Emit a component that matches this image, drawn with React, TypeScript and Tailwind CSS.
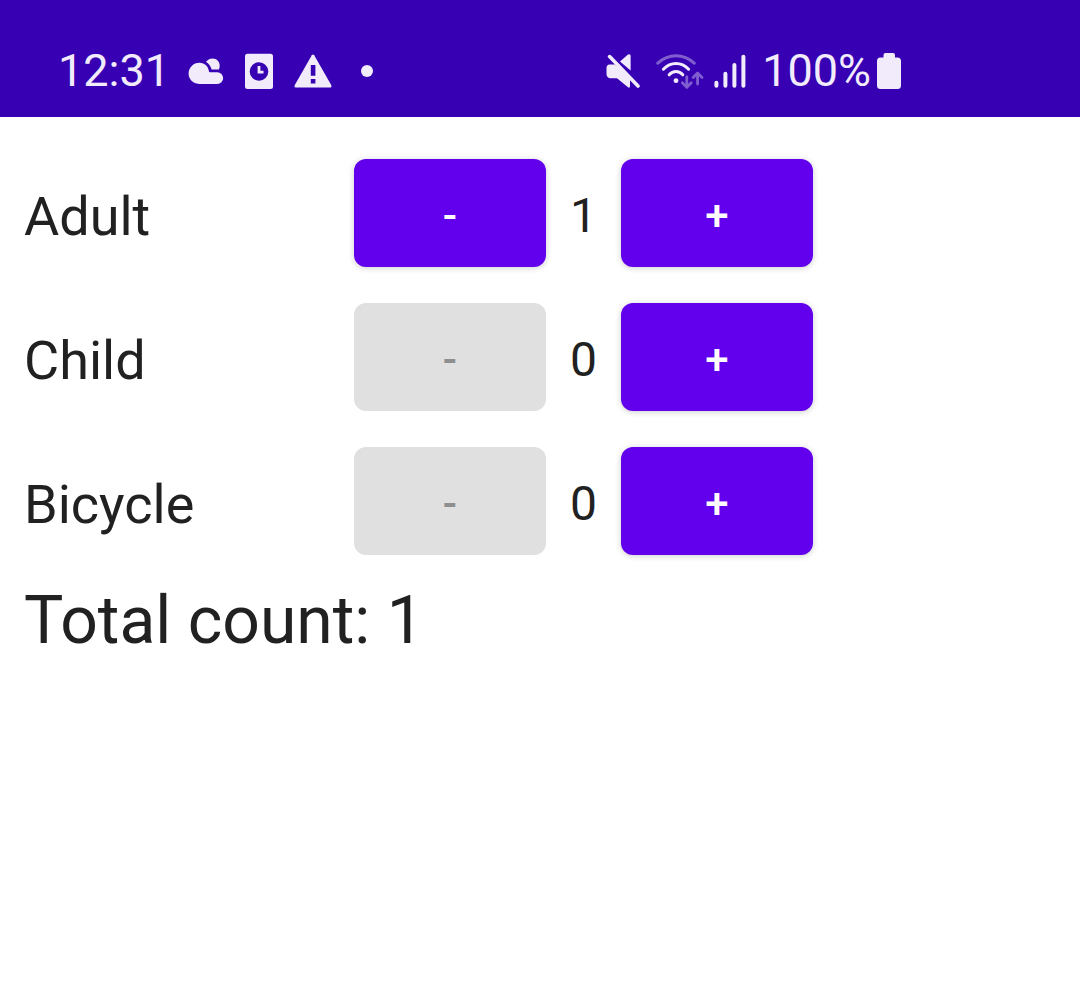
import React, { useState } from 'react';

interface CounterRowProps {
    label: string;
    count: number;
    onChange: (count: number) => void;
}

const CloudIcon = () => (
    <svg className="w-9 h-[26px]" viewBox="0 0 36 26" fill="currentColor" aria-hidden="true">
        <path d="M11.2 26A10.6 10.6 0 0 1 11.2 4.8C17 4.8 20.3 8.5 21 13.6C21.1 14.1 21.4 14.3 22 14.3H29.3A5.85 5.85 0 0 1 29.3 26Z" />
        <path d="M18 3.8C19.8 1.6 22 .4 24.6 .4C29 .4 31.7 3.8 31.7 7.5C31.7 9 31.5 10.2 30.9 11.4H23.6C22.6 8.2 20.8 5.6 18 3.8Z" />
    </svg>
);

const AlarmCardIcon = () => (
    <svg className="w-7 h-9" viewBox="0 0 28 36" aria-hidden="true">
        <rect y=".8" width="28" height="35.2" rx="2.5" fill="currentColor" />
        <circle cx="14" cy="18.5" r="9.3" fill="#3700b3" />
        <path d="M14 13V19.2H18.5" fill="none" stroke="currentColor" strokeWidth="2.8" />
    </svg>
);

const WarningIcon = () => (
    <svg className="w-[38px] h-[34px]" viewBox="0 0 38 34" aria-hidden="true">
        <path d="M17.8 1.2Q19 -.2 20.2 1.2L37.2 31Q38 33.5 36.4 33.5H1.6Q0 33.5 .8 31Z" fill="currentColor" />
        <path d="M16.8 11h4.6v10.8h-4.6zM16.8 25h4.6v4.6h-4.6z" fill="#3700b3" />
    </svg>
);

const MuteIcon = () => (
    <svg className="w-[34px] h-9" viewBox="0 0 34 36" aria-hidden="true">
        <path d="M3 11.5H9L24 25V33Q24 35.5 22 34.2L11 25.2H4Q.5 24.5 .5 21V15Q.5 12 3 11.5Z" fill="currentColor" />
        <path d="M14 8.5L22 1.6Q24.6 .3 24.6 3V17.6Z" fill="currentColor" />
        <path d="M3.6 3.6L32 33" stroke="currentColor" strokeWidth="3.6" strokeLinecap="round" />
    </svg>
);

const WifiIcon = () => (
    <svg className="w-12 h-9" viewBox="0 0 48 36" fill="none" stroke="currentColor" strokeWidth="3" strokeLinecap="round" aria-hidden="true">
        <path d="M1.8 10.2C12.5 .2 27.5 .2 38.2 10.2" opacity=".4" />
        <path d="M7.4 16.2C14.6 8.6 25.4 8.6 32.6 16.2" />
        <path d="M13.2 21.8C17 17.5 23 17.5 26.8 21.8" />
        <circle cx="20" cy="27.7" r="2.4" fill="currentColor" stroke="none" />
        <g strokeWidth="2.8" strokeLinejoin="round" opacity=".4">
            <path d="M30.8 24V34M26.4 29.8L30.8 34.4L35.2 29.8" />
            <path d="M41.6 31V20.4M37.2 24.4L41.6 20L46 24.4" />
        </g>
    </svg>
);

const SignalIcon = () => (
    <svg className="w-8 h-9" viewBox="0 0 32 36" stroke="currentColor" strokeWidth="4" strokeLinecap="round" aria-hidden="true">
        <path d="M2.4 29.8V32.8M11.4 20.8V32.8M20.4 12V32.8M29.4 3.8V32.8" />
    </svg>
);

const BatteryIcon = () => (
    <svg className="w-6 h-9" viewBox="0 0 24 36" fill="currentColor" aria-hidden="true">
        <path d="M8.5 0H16Q18 0 18 2V4.5H20.5Q24 4.5 24 8V32.5Q24 36 20.5 36H3.5Q0 36 0 32.5V8Q0 4.5 3.5 4.5H6.5V2Q6.5 0 8.5 0Z" />
    </svg>
);

const StatusBar = () => (
    <header className="flex h-[117px] items-center justify-between bg-[#3700b3] pt-6 pl-[58px] pr-[179px] text-[45px] leading-none text-[#f1ebfb]">
        <div className="flex items-center">
            <span className="mr-[18px]">12:31</span>
            <div className="flex items-center gap-[21px]">
                <CloudIcon />
                <AlarmCardIcon />
                <WarningIcon />
                <span className="ml-2 size-3 rounded-full bg-current" />
            </div>
        </div>
        <div className="flex items-center">
            <MuteIcon />
            <span className="ml-4 mr-2.5 flex"><WifiIcon /></span>
            <SignalIcon />
            <span className="ml-4 mr-1.5">100%</span>
            <BatteryIcon />
        </div>
    </header>
);

const buttonStyle =
    'h-[108px] w-[192px] rounded-xl bg-[#6200ee] pt-1 text-[42px] font-medium text-white shadow-[0_1px_6px_rgba(0,0,0,0.2)] disabled:bg-[#e0e0e0] disabled:text-[#8f8f8f] disabled:shadow-none';

const CounterRow: React.FC<CounterRowProps> = ({ label, count, onChange }) => (
    <div className="flex h-36 items-center" role="group" aria-label={label}>
        <span className="w-[330px] pt-2 text-[54px] leading-none">{label}</span>
        <button
            className={buttonStyle}
            disabled={count === 0}
            aria-label={`Remove ${label}`}
            onClick={() => onChange(count - 1)}
        >
            -
        </button>
        <span className="w-[75px] pt-1.5 text-center text-[48px] leading-none">{count}</span>
        <button className={buttonStyle} aria-label={`Add ${label}`} onClick={() => onChange(count + 1)}>
            +
        </button>
    </div>
);

const App: React.FC = () => {
    const [counts, setCounts] = useState({ Adult: 1, Child: 0, Bicycle: 0 });
    const total = counts.Adult + counts.Child + counts.Bicycle;

    return (
        <div className="min-h-screen bg-white font-['Roboto',sans-serif] text-[#212121]">
            <StatusBar />
            <main className="px-6 pt-6">
                {Object.entries(counts).map(([label, count]) => (
                    <CounterRow
                        key={label}
                        label={label}
                        count={count}
                        onChange={(value) => setCounts({ ...counts, [label]: value })}
                    />
                ))}
                <p className="pt-3 text-[66px] leading-[72px]">Total count: {total}</p>
            </main>
        </div>
    );
};

export default App;
